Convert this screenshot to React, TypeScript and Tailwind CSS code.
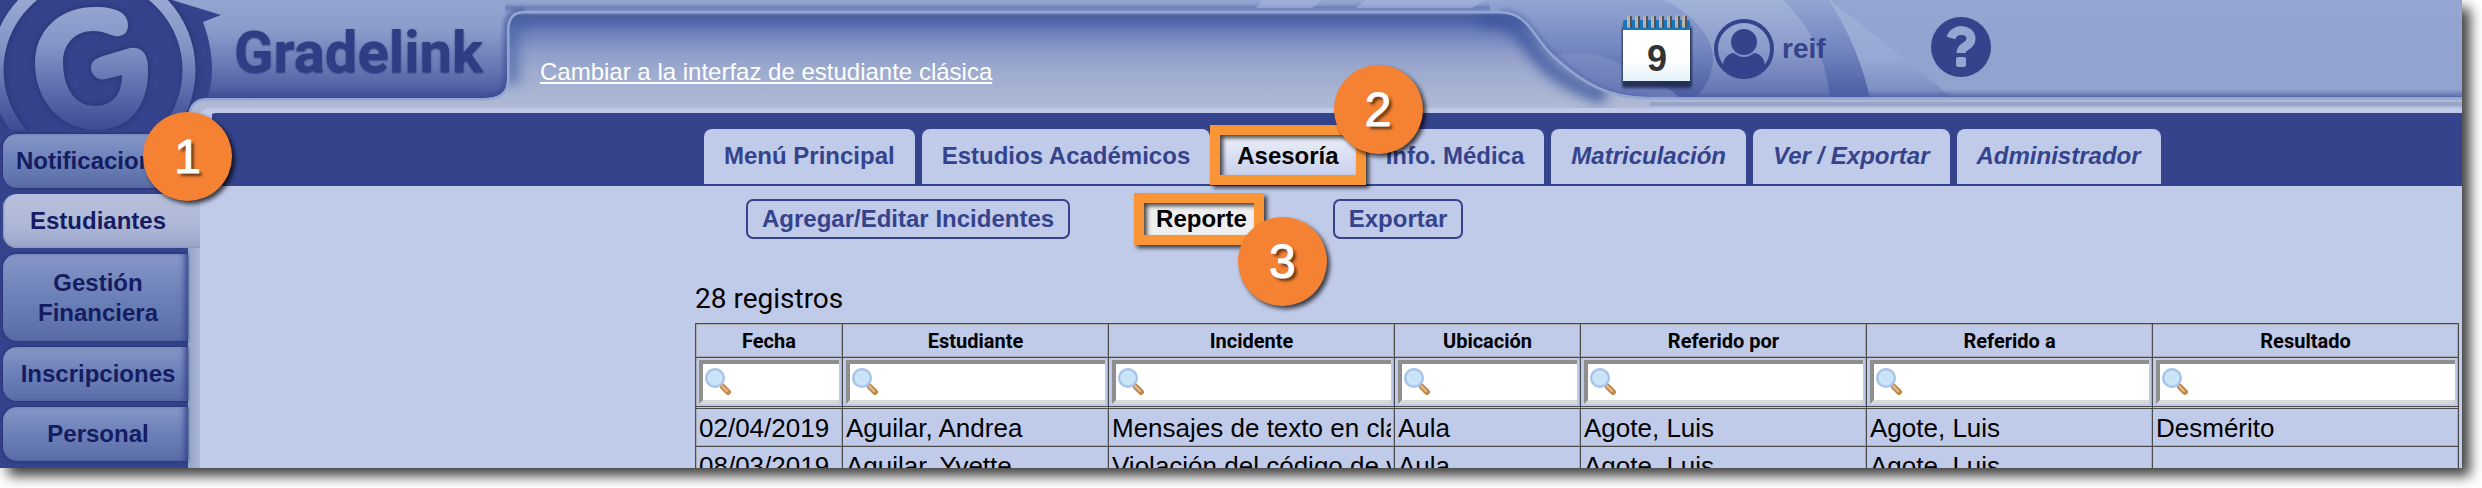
import React from 'react';

const sideItems = [
  { label: 'Notificaciones' },
  { label: 'Estudiantes', active: true },
  { label: 'Gestión Financiera', tall: true },
  { label: 'Inscripciones' },
  { label: 'Personal' },
];

const tabs = [
  { label: 'Menú Principal' },
  { label: 'Estudios Académicos' },
  { label: 'Asesoría', active: true },
  { label: 'Info. Médica' },
  { label: 'Matriculación', italic: true },
  { label: 'Ver / Exportar', italic: true },
  { label: 'Administrador', italic: true },
];

const columns = [
  { name: 'Fecha', width: 'w-[147px]' },
  { name: 'Estudiante', width: 'w-[266px]' },
  { name: 'Incidente', width: 'w-[286px]' },
  { name: 'Ubicación', width: 'w-[186px]' },
  { name: 'Referido por', width: 'w-[286px]' },
  { name: 'Referido a', width: 'w-[286px]' },
  { name: 'Resultado', width: '' },
];

const rows = [
  ['02/04/2019', 'Aguilar, Andrea', 'Mensajes de texto en clase', 'Aula', 'Agote, Luis', 'Agote, Luis', 'Desmérito'],
  ['08/03/2019', 'Aguilar, Yvette', 'Violación del código de vestimenta', 'Aula', 'Agote, Luis', 'Agote, Luis', ''],
];

const Step = ({ n, className }: { n: number; className: string }) => (
  <span
    className={`absolute z-20 flex size-[89px] items-center justify-center rounded-full bg-[#f58233] font-['Liberation_Sans',sans-serif] text-[48px] font-normal not-italic text-white shadow-[3px_3px_4px_rgba(0,0,0,0.7)] [-webkit-text-stroke:1px_white] [text-shadow:3px_3px_3px_rgba(0,0,0,0.6)] ${className}`}
  >
    {n}
  </span>
);

const Frame = ({ className }: { className: string }) => (
  <span className={`pointer-events-none absolute z-10 border-10 border-[#fa9537] drop-shadow-[3px_3px_2px_rgba(0,0,0,0.7)] ${className}`} />
);

// Header artwork: logo emblem, raised panel and the swirls on the right
const HeaderArt = () => (
  <svg className="absolute left-0 top-0 h-[130px] w-full" aria-hidden="true">
    <defs>
      <linearGradient id="base" gradientUnits="userSpaceOnUse" x1="0" y1="0" x2="0" y2="98">
        <stop offset="0" stopColor="#93a5d0" />
        <stop offset="0.3" stopColor="#8b9ccb" />
        <stop offset="0.7" stopColor="#6676b3" />
        <stop offset="1" stopColor="#46549b" />
      </linearGradient>
      <linearGradient id="flat" gradientUnits="userSpaceOnUse" x1="0" y1="0" x2="0" y2="98">
        <stop offset="0" stopColor="#93a5d0" />
        <stop offset="0.91" stopColor="#90a2ce" />
        <stop offset="0.96" stopColor="#7181b9" />
        <stop offset="1" stopColor="#4d5ea3" />
      </linearGradient>
      <linearGradient id="panel" gradientUnits="userSpaceOnUse" x1="0" y1="11" x2="0" y2="108">
        <stop offset="0" stopColor="#8294c6" />
        <stop offset="0.05" stopColor="#4c61a2" />
        <stop offset="0.11" stopColor="#4f65a8" />
        <stop offset="0.22" stopColor="#6c80ba" />
        <stop offset="0.42" stopColor="#8e9bc9" />
        <stop offset="0.62" stopColor="#9dabcf" />
        <stop offset="1" stopColor="#b0bad5" />
      </linearGradient>
      <linearGradient id="topShade" gradientUnits="userSpaceOnUse" x1="0" y1="0" x2="0" y2="11">
        <stop offset="0" stopColor="#95a6d1" />
        <stop offset="0.35" stopColor="#8d9ecc" />
        <stop offset="0.7" stopColor="#6c7eb8" />
        <stop offset="1" stopColor="#7f90c4" />
      </linearGradient>
      <linearGradient id="swirlLight" gradientUnits="userSpaceOnUse" x1="0" y1="0" x2="0" y2="98">
        <stop offset="0" stopColor="#a3b4d9" />
        <stop offset="0.5" stopColor="#8b9bcb" />
        <stop offset="0.94" stopColor="#6575b4" />
        <stop offset="1" stopColor="#4b5ba2" />
      </linearGradient>
      <linearGradient id="swirlDark" gradientUnits="userSpaceOnUse" x1="0" y1="0" x2="0" y2="98">
        <stop offset="0" stopColor="#93a5d1" />
        <stop offset="0.5" stopColor="#7386bf" />
        <stop offset="1" stopColor="#4b5ba3" />
      </linearGradient>
      <linearGradient id="swirlRight" gradientUnits="userSpaceOnUse" x1="0" y1="0" x2="0" y2="98">
        <stop offset="0" stopColor="#a0b1d8" />
        <stop offset="0.6" stopColor="#97a8d3" />
        <stop offset="0.92" stopColor="#7d8ec4" />
        <stop offset="1" stopColor="#4f5fa5" />
      </linearGradient>
      <linearGradient id="emblem" gradientUnits="userSpaceOnUse" x1="0" y1="0" x2="0" y2="130">
        <stop offset="0" stopColor="#98a8d2" />
        <stop offset="0.35" stopColor="#8494c6" />
        <stop offset="0.7" stopColor="#5c6bad" />
        <stop offset="1" stopColor="#3d4b94" />
      </linearGradient>
      <filter id="soft" x="-20%" y="-20%" width="140%" height="140%">
        <feGaussianBlur stdDeviation="6" />
      </filter>
      <filter id="softSmall" x="-20%" y="-20%" width="140%" height="140%">
        <feGaussianBlur stdDeviation="2" />
      </filter>
      <clipPath id="panelClip">
        <path d="M188 130 V115 Q190 98 206 98 H484 Q507 98 507 80 V30 Q507 11 524 11 H1500 C1530 11 1534 38 1556 57 C1582 80 1606 97 1650 97 H6000 V108 H208 V130 Z" />
      </clipPath>
    </defs>

    <rect width="100%" height="108" fill="url(#flat)" />
    <rect width="1640" height="108" fill="url(#base)" />
    <rect x="505" width="1000" height="12" fill="url(#topShade)" />
    <path d="M1262 0 h60 l-10 8 h-56 z M1366 0 h120 l-14 8 h-116 z" fill="#a7b6dc" opacity="0.6" />

    <path d="M1490 0 H1860 V98 H1490 Z" fill="url(#swirlLight)" />
    <path d="M1490 0 H1664 C1700 18 1714 42 1713 62 C1710 80 1704 90 1694 98 H1490 Z" fill="url(#swirlDark)" />
    <path d="M1554 56 Q1590 46 1625 66 Q1660 80 1680 98 H1600 Z" fill="#8694c8" opacity="0.5" />
    <path d="M1832 0 H2000 V98 H1860 Z" fill="url(#flat)" />
    <path d="M1830 0 C1880 40 1920 70 1952 98 H1860 Z" fill="url(#swirlRight)" />
    <path d="M1783 0 H1829 C1848 30 1862 62 1870 98 H1830 C1826 60 1812 28 1783 0 Z" fill="url(#swirlDark)" />

    {/* raised panel */}
    <path d="M206 98 H484 Q507 98 507 80 V30 Q507 12 524 12" fill="none" stroke="#35438c" strokeWidth="8" opacity="0.5" filter="url(#softSmall)" />
    <path d="M1500 11 C1530 11 1534 38 1556 57 C1582 80 1606 97 1650 97" fill="none" stroke="#4f5ea8" strokeWidth="4" opacity="0.6" filter="url(#softSmall)" />
    <g clipPath="url(#panelClip)">
      <rect width="100%" height="130" fill="url(#panel)" />
      <path d="M512 84 V36 Q512 18 530 18" fill="none" stroke="#4a63a6" strokeWidth="14" opacity="0.7" filter="url(#soft)" />
      <path d="M1480 20 H1500 C1522 26 1526 46 1548 66 C1564 80 1584 90 1606 97" fill="none" stroke="#3f589f" strokeWidth="16" opacity="0.8" filter="url(#soft)" />
      <rect x="1650" y="102" width="100%" height="4" fill="#8c9cc4" opacity="0.7" />
      <path
        d="M188 130 V115 Q190 98 206 98 H484 Q507 98 507 80 V30 Q507 11 524 11 H1500 C1530 11 1534 38 1556 57 C1582 80 1606 97 1650 97 H6000"
        fill="none"
        stroke="#93a6d2"
        strokeWidth="5"
      />
    </g>
    <path d="M199 130 V118 Q200 108 212 108 V130 Z" fill="#c0cae9" />

    {/* emblem */}
    <path d="M0 0 H172 L221 15 L203 22 C209 38 212 54 212 70 C212 80 210 90 207 98 Q190 98 188 115 V130 H0 Z" fill="#35438c" />
    <clipPath id="logoClip">
      <path d="M0 0 H212 V97 Q190 98 188 112 V130 H0 Z" />
    </clipPath>
    <g clipPath="url(#logoClip)">
      <circle cx="94" cy="70" r="96" fill="none" stroke="#26326f" strokeWidth="16" opacity="0.6" filter="url(#softSmall)" />
      <circle cx="93" cy="70" r="96" fill="none" stroke="url(#emblem)" strokeWidth="13" />
    </g>
    <path
      d="M95 7 C120 7 128 15 128 25 C128 34 122 37 115 36 C107 34 103 31 93 31 C75 31 63 44 63 62 C63 88 75 106 95 106 C112 106 122 95 122 75 L106 79 C98 81 91 75 91 68 C91 61 95 59 103 56 L130 48 C140 46 148 52 148 68 C149 105 130 130 97 130 C60 130 35 100 35 63 C35 30 60 7 95 7 Z"
      fill="#26326f"
      stroke="#26326f"
      strokeWidth="3"
      opacity="0.7"
      filter="url(#softSmall)"
    />
    <path
      d="M95 7 C120 7 128 15 128 25 C128 34 122 37 115 36 C107 34 103 31 93 31 C75 31 63 44 63 62 C63 88 75 106 95 106 C112 106 122 95 122 75 L106 79 C98 81 91 75 91 68 C91 61 95 59 103 56 L130 48 C140 46 148 52 148 68 C149 105 130 130 97 130 C60 130 35 100 35 63 C35 30 60 7 95 7 Z"
      fill="url(#emblem)"
    />
  </svg>
);

const CalendarIcon = () => (
  <svg className="absolute inset-0" width="72" height="82" viewBox="0 0 72 82" aria-hidden="true">
    <defs>
      <linearGradient id="paper" x1="0" y1="0" x2="0" y2="1">
        <stop offset="0.6" stopColor="#ffffff" />
        <stop offset="1" stopColor="#e3f1fa" />
      </linearGradient>
      <filter id="calBlur">
        <feGaussianBlur stdDeviation="1.5" />
      </filter>
    </defs>
    <rect x="1" y="12" width="70" height="62" rx="3" fill="#1d2950" opacity="0.9" filter="url(#calBlur)" />
    <rect x="2" y="6" width="67" height="14" rx="2" fill="#1c74b8" />
    <rect x="2" y="16" width="67" height="51" fill="url(#paper)" />
    {[8, 16, 24, 32, 40, 48, 56, 63].map(x => (
      <g key={x}>
        <rect x={x - 2} y="1" width="4" height="13" rx="2" fill="#b9b4ae" />
        <rect x={x + 1} y="2" width="2" height="12" fill="#4f5560" />
      </g>
    ))}
  </svg>
);

const UserIcon = () => (
  <svg width="60" height="60" viewBox="0 0 60 60" aria-hidden="true">
    <clipPath id="userClip">
      <circle cx="30" cy="30" r="29" />
    </clipPath>
    <circle cx="30" cy="30" r="28" fill="none" stroke="#35438c" strokeWidth="4" />
    <circle cx="30" cy="23" r="13" fill="#35438c" />
    <path d="M9 60 V46 C10 38 15 34 20 34 Q30 42 40 34 C45 34 50 38 51 46 V60 Z" fill="#35438c" clipPath="url(#userClip)" />
  </svg>
);

const HelpIcon = () => (
  <svg width="60" height="60" viewBox="0 0 60 60" aria-hidden="true">
    <circle cx="30" cy="30" r="30" fill="#35438c" />
    <path d="M20 21 C23 11 40 11 40 22 C40 30 30 28 30 36" fill="none" stroke="#94a6d1" strokeWidth="9" />
    <rect x="25" y="40" width="10" height="10" rx="2" fill="#94a6d1" />
  </svg>
);

const SearchIcon = () => (
  <svg className="ml-px shrink-0" width="28" height="30" viewBox="0 0 28 30" aria-hidden="true">
    <path d="M19 20 L24 25" stroke="#c08a4e" strokeWidth="6" strokeLinecap="round" />
    <path d="M18 19 L23 24" stroke="#e3bd8c" strokeWidth="2" strokeLinecap="round" />
    <circle cx="11" cy="11" r="9" fill="#bfdcf6" stroke="#a3c0ea" strokeWidth="2" />
    <circle cx="11" cy="11" r="6" fill="#c9e3f9" stroke="#dcedfb" strokeWidth="1" />
  </svg>
);

const App = () => {
  return (
    <div className="h-screen overflow-hidden bg-white pb-5 pr-5 font-['Liberation_Sans',Arial,sans-serif]">
      <div className="h-full shadow-[8px_8px_12px_rgba(0,0,0,0.75)]">
        <div className="relative flex h-full flex-col overflow-hidden bg-[#c0cae9]">
          <header className="relative z-10 flex h-[113px] shrink-0 items-start border-b-5 border-[#c0cae9]">
            <HeaderArt />
            <div className="relative w-[540px] shrink-0 pl-[234px] pt-4">
              <span className="font-['Roboto',sans-serif] text-[58px] font-bold leading-[72px] text-[#2f3d84] [text-shadow:0_1px_2px_#2a3678]">
                Gradelink
              </span>
            </div>
            <div className="relative w-[1081px] shrink-0 pt-14">
              <a href="#" className="text-[24px] leading-8 text-white underline underline-offset-2">
                Cambiar a la interfaz de estudiante clásica
              </a>
            </div>
            <div className="relative flex items-start pt-[14px]">
              <button aria-label="Calendario" className="relative h-[82px] w-[72px]">
                <CalendarIcon />
                <span className="relative text-[36px] font-bold leading-[90px] text-[#333]">9</span>
              </button>
              <button className="ml-[21px] mt-[5px] flex items-center gap-2 text-[28px] font-bold text-[#35438c]">
                <UserIcon />
                reif
              </button>
              <button aria-label="Ayuda" className="ml-[105px] mt-[3px]">
                <HelpIcon />
              </button>
            </div>
          </header>

          <div className="flex min-h-0 flex-1">
            <nav className="relative flex w-[188px] shrink-0 flex-col gap-[6px] bg-[#35438c] pl-[3px] pt-[21px]">
              {sideItems.map(item => (
                <button
                  key={item.label}
                  className={`shrink-0 rounded-l-[14px] text-[24px] font-bold leading-[30px] text-[#151c62] ${item.tall ? 'min-h-[87px]' : 'min-h-[54px]'} ${
                    item.active
                      ? 'relative z-10 -mr-3 bg-linear-to-b from-[#b6c0dc] via-[#b0bad8] to-[#9ba5c9] pl-[5px] pr-3 shadow-[inset_1px_-1px_2px_#8d98bf]'
                      : 'bg-linear-to-b from-[#8797c6] via-[#6b80b9] to-[#5a6ca6] pl-[5px] pr-0 shadow-[0_0_3px_#1c275f,inset_-6px_0_6px_-3px_#35438c]'
                  }`}
                >
                  {item.label}
                </button>
              ))}
              <Step n={1} className="-top-px left-[143px]" />
            </nav>

            <main className="min-w-0 flex-1">
              <div className="flex h-full">
                <div className="w-3 shrink-0 bg-linear-to-r from-[#93a4ca] to-[#aab6d6]" />
                <div className="min-w-0 flex-1">
                  <nav className="ml-2 flex gap-[7px] rounded-tl-[8px] border-b-2 border-[#35438c] bg-[#35438c] pl-[496px] pt-4">
                    {tabs.map(tab => (
                      <div key={tab.label} className="relative shrink-0">
                        <button
                          className={`h-[55px] rounded-t-[8px] px-5 pb-[2px] text-[24px] font-bold ${tab.italic ? 'italic' : ''} ${
                            tab.active ? 'bg-linear-to-b from-[#f2f4fb] to-[#c0cae9] text-black' : 'bg-[#c0cae9] text-[#35438c]'
                          }`}
                        >
                          {tab.label}
                        </button>
                        {tab.active && (
                          <>
                            <Frame className="-bottom-px -left-[7px] -right-[7px] -top-1" />
                            <Step n={2} className="-right-16 -top-16" />
                          </>
                        )}
                      </div>
                    ))}
                  </nav>

                  <div className="flex gap-[70px] pl-[546px] pt-[13px] text-[24px] font-bold">
                    <button className="h-10 rounded-[7px] border-2 border-[#35438c] px-[14px] leading-8 text-[#35438c]">
                      Agregar/Editar Incidentes
                    </button>
                    <div className="relative">
                      <button className="h-10 border-2 border-[#efefef] bg-[#efefef] px-[14px] leading-8 text-black">Reporte</button>
                      <Frame className="-bottom-[6px] -left-[6px] -right-px -top-[6px]" />
                      <Step n={3} className="-right-16 top-[18px]" />
                    </div>
                    <button className="h-10 rounded-[7px] border-2 border-[#35438c] px-[14px] leading-8 text-[#35438c]">
                      Exportar
                    </button>
                  </div>

                  <section className="pl-[495px] pr-[3px] pt-10">
                    <h2 className="mb-1 font-['Roboto',sans-serif] text-[28px] leading-10 text-black">28 registros</h2>
                    <table className="w-full table-fixed border-separate border-spacing-0 border-l border-t border-[#4b4b4b] text-black shadow-[inset_1px_1px_0_#ababab]">
                      <thead>
                        <tr>
                          {columns.map(col => (
                            <th
                              key={col.name}
                              className={`h-[34px] border-b border-r border-[#4b4b4b] p-0 font-['Roboto',sans-serif] text-[20px] font-bold leading-[30px] shadow-[inset_-1px_-1px_0_#ababab] ${col.width}`}
                            >
                              {col.name}
                            </th>
                          ))}
                        </tr>
                        <tr>
                          {columns.map(col => (
                            <td key={col.name} className="border-b-3 border-r border-[#4b4b4b] px-[3px] py-[2px] shadow-[inset_-1px_0_0_#ababab] [border-bottom-style:double]">
                              <label className="flex h-[44px] items-center border-4 border-r-0 border-b-[#d8d8d8] border-l-[#8f8f8f] border-t-[#8f8f8f] bg-white">
                                <SearchIcon />
                                <input type="text" aria-label={`Buscar ${col.name}`} className="h-full min-w-0 flex-1 bg-transparent px-1 text-[20px] outline-none" />
                              </label>
                            </td>
                          ))}
                        </tr>
                      </thead>
                      <tbody>
                        {rows.map(row => (
                          <tr key={row[0]}>
                            {row.map((cell, i) => (
                              <td key={i} className="h-[38px] border-b border-r border-[#4b4b4b] px-[3px] py-0 text-[26px] leading-9 shadow-[inset_-1px_-1px_0_#ababab]">
                                <div className="overflow-hidden whitespace-nowrap">{cell}</div>
                              </td>
                            ))}
                          </tr>
                        ))}
                      </tbody>
                    </table>
                  </section>
                </div>
              </div>
            </main>
          </div>
        </div>
      </div>
    </div>
  );
};

export default App;
